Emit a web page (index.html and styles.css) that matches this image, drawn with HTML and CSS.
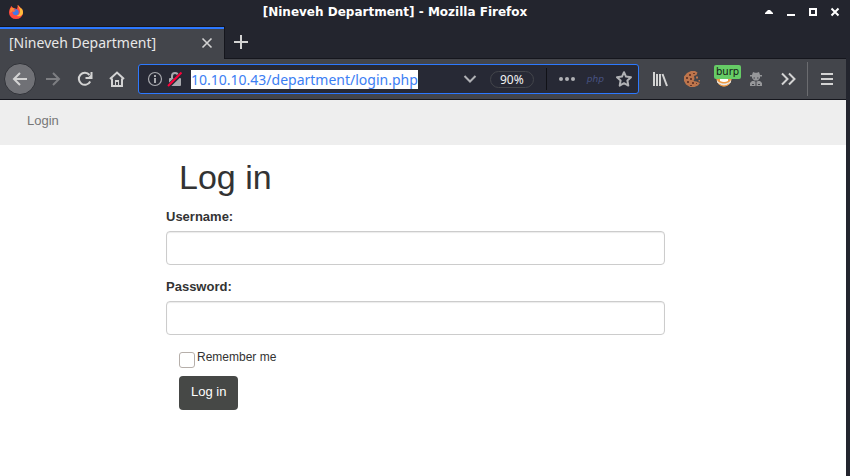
FILE: index.html
```html
<!DOCTYPE html>
<html lang="en">
<head>
<meta charset="utf-8">
<title>[Nineveh Department]</title>
<link rel="stylesheet" href="styles.css">
</head>
<body>
<div class="window">
  <header class="titlebar">
    <svg class="firefox" width="16" height="16" viewBox="0 0 16 16" aria-hidden="true">
      <path fill="#ff4a3f" d="M2.500 4c0-1 .5-1.800 1-2 .2.900.8 1.500 1.500 1.800L9 5l1-4c1 .6 1.500 1.600 2.300 2.500C14 5 15 6.500 15 8.700A7 6.300 0 0 1 1 8.700C1 6.500 1.500 5 2.500 4z"/>
      <path fill="#ffbd3c" d="M9.200.8c.8 2.200 2.800 3 2.800 6.700 0 2-1.200 3.800-3.500 4.200 4 1.600 6.500-.7 6.500-3.200 0-2-.7-3.500-1.700-4.500l.1 1.200C12.600 3.300 10.500 2.800 9.200.8z"/>
      <path fill="#ff8a32" d="M2.500 4c1.500-.8 3-.2 4 .8L5 7l-3 2z"/>
      <circle cx="7.700" cy="8.300" r="3" fill="#4279e8"/>
      <path fill="#ff7139" d="M4 6.300c1.600-.9 2.600 0 3.800.3-.7 1-1.900 1-2.400 1.400z"/>
    </svg>
    <div class="window-title">[Nineveh Department] - Mozilla Firefox</div>
    <div class="window-controls">
      <button type="button" aria-label="Shade"><svg width="10" height="10" viewBox="0 0 10 10"><path fill="#fff" d="M1 7V6l3-3h2l3 3v1z"/></svg></button>
      <button type="button" aria-label="Minimize"><svg width="10" height="10" viewBox="0 0 10 10"><path fill="#fff" d="M1 7h8v2H1z"/></svg></button>
      <button type="button" aria-label="Maximize"><svg width="10" height="10" viewBox="0 0 10 10"><path fill="none" stroke="#fff" stroke-width="2" d="M2 2h6v6H2z"/></svg></button>
      <button type="button" aria-label="Close"><svg width="10" height="10" viewBox="0 0 10 10"><path stroke="#fff" stroke-width="2" d="M1.500 1.500l7 7m0-7l-7 7"/></svg></button>
    </div>
  </header>

  <div class="frame">
    <div class="tabs">
      <div class="tab">
        <span class="tab-label">[Nineveh Department]</span>
        <button type="button" aria-label="Close tab"><svg width="12" height="12" viewBox="0 0 12 12"><path stroke="#d3d3d3" stroke-width="1.600" d="M1.500 1.500l9 9m0-9l-9 9"/></svg></button>
      </div>
      <button class="new-tab" type="button" aria-label="New tab"><svg width="16" height="16" viewBox="0 0 16 16"><path stroke="#d3d3d3" stroke-width="2" d="M8 1v14M1 8h14"/></svg></button>
    </div>

    <nav class="toolbar" aria-label="Navigation">
      <button class="tool back" type="button" aria-label="Back"><svg width="16" height="16" viewBox="0 0 16 16"><path class="line" d="M15 8H2M8 2L2 8l6 6"/></svg></button>
      <button class="tool forward" type="button" aria-label="Forward" disabled><svg width="16" height="16" viewBox="0 0 16 16"><path class="line" d="M1 8h13M8 2l6 6-6 6"/></svg></button>
      <button class="tool" type="button" aria-label="Reload"><svg width="16" height="16" viewBox="0 0 16 16"><path class="line" d="M13.200 10.500A6 6 0 1 1 12.500 4"/><path fill="#d3d3d3" d="M15.500 1v7h-7V6h3l2-2V1z"/></svg></button>
      <button class="tool" type="button" aria-label="Home"><svg width="16" height="16" viewBox="0 0 16 16"><path class="line" d="M1 8l7-6.500L15 8M3 7.500V15h10V7.500"/><path fill="#d3d3d3" d="M6 9h4v5H9v-3H7v3H6z"/></svg></button>

      <div class="urlbar">
        <svg class="info" width="16" height="16" viewBox="0 0 16 16" aria-hidden="true"><circle cx="8" cy="8" r="6.500" fill="none" stroke="#a8a9ae" stroke-width="1.200"/><path fill="#a8a9ae" d="M7 4h2v2H7zM7 7h2v5H7z"/></svg>
        <svg class="lock" width="16" height="16" viewBox="0 0 16 16" aria-hidden="true"><path fill="none" stroke="#a8a9ae" stroke-width="2" d="M5 8V5a3 3 0 0 1 6 0v3"/><rect x="2" y="7" width="12" height="8" rx="1" fill="#a8a9ae"/><path stroke="#272935" stroke-width="4" d="M1.500 15L15 2"/><path stroke="#ff0039" stroke-width="2" d="M1 15L14.500 1.500"/></svg>
        <input class="address" type="text" aria-label="Address" value="10.10.10.43/department/login.php" size="32">
        <div class="url-actions">
          <button class="history" type="button" aria-label="Show history"><svg width="16" height="16" viewBox="0 0 16 16"><path class="line muted" d="M2.500 5L8 10.500 13.500 5"/></svg></button>
          <button class="zoom" type="button">90%</button>
          <span class="url-divider"></span>
          <button type="button" aria-label="Page actions"><svg width="16" height="16" viewBox="0 0 16 16"><g fill="#b0b1b5"><circle cx="2" cy="8" r="2"/><circle cx="8" cy="8" r="2"/><circle cx="14" cy="8" r="2"/></g></svg></button>
          <span class="php">php</span>
          <button type="button" aria-label="Bookmark"><svg width="16" height="16" viewBox="0 0 16 16"><path class="line muted" stroke-linejoin="round" d="M8 1.200l2 4.400 5 .6-3.600 3.300.9 5.100L8 12.200l-4.300 2.400.9-5.100L1 6.200l5-.6z"/></svg></button>
        </div>
      </div>

      <button class="tool" type="button" aria-label="Library"><svg width="16" height="16" viewBox="0 0 16 16"><path class="line" d="M2 1v14M5 3v12M8 3v12M10.500 3L15 15"/></svg></button>
      <button class="tool" type="button" aria-label="Cookies"><svg width="16" height="16" viewBox="0 0 16 16"><path fill="#bd754c" d="M7 0h4l2.500 1.500-1 2.500-2.500 1 .5 3-1 2 3 .5 3.500 1.500-2 2.500-3.500 1.500H6L2 13.500 0 10V5.500L3 2z"/><path fill="#bd754c" d="M12 5.500h2v2h-2zM14.500 9H16v1.500h-1.500z"/><path fill="#6d3b2a" d="M5 3h2v2H5zM9 2h2v1H9zM2 6h2v2H2zM6 7h2v2H6zM3 10h2v2H3zM8 11h2v2H8zM6 14h2v1H6zM12 12h1v1h-1z"/></svg></button>
      <button class="tool burp" type="button" aria-label="Proxy: burp"><svg width="16" height="16" viewBox="0 0 16 16"><circle cx="8" cy="8" r="7.500" fill="#f09a42"/><path fill="#e6e8e9" d="M.7 8C2 14 14 14 15.300 8l-.5 3.500Q8 18 1.200 11.500z"/><path fill="#f09a42" d="M3 12.500q5 4 10 0l-1.500 2q-3.500 2-7 0z"/><path fill="#fff" d="M4 8h8v2q-4 2-8 0z"/></svg><span class="badge">burp</span></button>
      <button class="tool" type="button" aria-label="Private agent"><svg width="14" height="16" viewBox="0 0 14 16"><g fill="#96979a"><path d="M4 1l2 .7h2L10 1l1 3h2v1.500H1V4h2zM3 5h8v2L9 9.500H5L3 7z"/><path d="M1 15v-3l2-2h2l2 1 2-1h2l2 2v3z"/></g><path fill="#43454b" d="M4.500 6.500H6v1H4.500zM8 6.500h1.500v1H8zM6.500 11h1v4h-1zM3 13h2v1H3zM9 13h2v1H9z"/></svg></button>
      <button class="tool" type="button" aria-label="More tools"><svg width="16" height="16" viewBox="0 0 16 16"><path class="line" d="M2 2.500L7.500 8 2 13.500M9 2.500L14.500 8 9 13.500"/></svg></button>
      <span class="toolbar-divider"></span>
      <button class="tool" type="button" aria-label="Menu"><svg width="16" height="16" viewBox="0 0 16 16"><path class="line" d="M2 3h12M2 8h12M2 13h12"/></svg></button>
    </nav>

    <div class="page">
      <nav class="navbar"><a href="#">Login</a></nav>
      <main class="content">
        <form class="login">
          <h1>Log in</h1>
          <div class="field">
            <label for="username">Username:</label>
            <input id="username" name="username" type="text">
          </div>
          <div class="field">
            <label for="password">Password:</label>
            <input id="password" name="password" type="password">
          </div>
          <div class="remember">
            <input id="remember" name="rememberme" type="checkbox">
            <label for="remember">Remember me</label>
          </div>
          <button class="submit" type="submit">Log in</button>
        </form>
      </main>
    </div>
  </div>
</div>
</body>
</html>
```
FILE: styles.css
```css
* {
  box-sizing: border-box;
}

body {
  margin: 0;
  background: #23252e;
  color: #333;
  font: 13px/18px "Liberation Sans", sans-serif;
}

button {
  display: flex;
  align-items: center;
  justify-content: center;
  padding: 0;
  border: 0;
  background: none;
  color: inherit;
  font: inherit;
}

svg {
  display: block;
  flex: none;
}

.window {
  display: flex;
  flex-direction: column;
  min-height: 100vh;
}

.titlebar {
  display: grid;
  grid-template-columns: 1fr auto 1fr;
  align-items: center;
  height: 26px;
  padding: 0 10px 2px 8px;
  color: #fff;
}

.window-title {
  padding-right: 58px;
  font: bold 12px/16px "DejaVu Sans", sans-serif;
}

.window-controls {
  display: flex;
  justify-content: flex-end;
  gap: 12px;
}

.frame {
  display: flex;
  flex: 1;
  flex-direction: column;
  margin-right: 4px;
}

.tabs {
  display: flex;
  height: 33px;
  border-bottom: 1px solid #15161d;
}

.tab {
  display: flex;
  align-items: center;
  justify-content: space-between;
  width: 225px;
  height: 33px;
  padding: 0 11px 0 9px;
  border-top: 1px solid #15161d;
  border-right: 1px solid #15161d;
  background: #43454b;
  box-shadow: inset 0 2px #2d79ff;
  color: #e8e8e8;
  font: 14px/20px "Noto Sans", sans-serif;
}

.new-tab {
  width: 32px;
}

.toolbar {
  display: flex;
  align-items: center;
  height: 41px;
  padding: 0 3px 0 4px;
  border-bottom: 1px solid #15161d;
  background: #43454b;
}

.line {
  fill: none;
  stroke: #d3d3d3;
  stroke-width: 2;
}

.muted {
  stroke: #b0b1b5;
}

.tool {
  flex: none;
  width: 32px;
  height: 32px;
}

.back {
  margin-right: 1px;
  border: 1px solid #303238;
  border-radius: 50%;
  background: #707176;
}

.forward .line {
  stroke: #7d7e82;
}

.urlbar {
  display: flex;
  flex: 1;
  align-items: center;
  min-width: 0;
  height: 30px;
  margin: 0 5px;
  padding: 0 6px 0 8px;
  border: 1px solid #2d79ff;
  border-radius: 3px;
  background: #272935;
}

.lock {
  margin: 0 8px 0 4px;
}

.address {
  field-sizing: content;
  min-width: 0;
  height: 19px;
  padding: 0;
  border: 0;
  background: #fff;
  color: #3c7ef3;
  font: 14px/19px "Noto Sans", sans-serif;
}

.url-actions {
  display: flex;
  align-items: center;
  gap: 12px;
  margin-left: auto;
}

.zoom {
  width: 44px;
  height: 17px;
  border: 1px solid #43454b;
  border-radius: 9px;
  color: #f3f3f3;
  font: 12px/15px "Noto Sans", sans-serif;
}

.url-divider {
  width: 1px;
  height: 22px;
  background: #101117;
}

.php {
  color: #485383;
  font: italic 9px/16px "DejaVu Sans", sans-serif;
}

.burp {
  position: relative;
}

.badge {
  position: absolute;
  top: 2px;
  left: 6px;
  padding: 0 2px;
  border-radius: 2px;
  background: #66cc66;
  color: #162016;
  font: 10px/14px "DejaVu Sans", sans-serif;
}

.toolbar-divider {
  width: 1px;
  height: 34px;
  margin: 0 3px;
  background: #6b6c70;
}

.page {
  flex: 1;
  background: #fff;
}

.navbar {
  padding: 12px 27px 15px;
  background: #eee;
}

.navbar a {
  color: #777;
  text-decoration: none;
}

.content {
  display: grid;
  grid-template-columns: 166fr 499fr 181fr;
}

.login {
  grid-column: 2;
}

h1 {
  margin: 13px 13px 12px;
  font-size: 34px;
  font-weight: 400;
  line-height: 38px;
}

.field {
  margin-bottom: 13px;
}

.field label {
  display: block;
  margin-bottom: 5px;
  font-weight: 700;
}

.field input {
  display: block;
  width: 100%;
  height: 34px;
  padding: 6px 12px;
  border: 1px solid #ccc;
  border-radius: 4px;
  box-shadow: inset 0 1px 1px #ececec;
  font: inherit;
}

.remember {
  display: flex;
  gap: 2px;
  margin: 13px 13px 8px;
  font-size: 12px;
}

.remember input {
  appearance: none;
  width: 16px;
  height: 16px;
  margin: 4px 0 0;
  border: 1px solid #b6afaa;
  border-radius: 3px;
  background: #fff;
}

.submit {
  height: 34px;
  margin-left: 13px;
  padding: 0 12px 2px;
  border-radius: 4px;
  background: #464846;
  color: #fff;
}
```
